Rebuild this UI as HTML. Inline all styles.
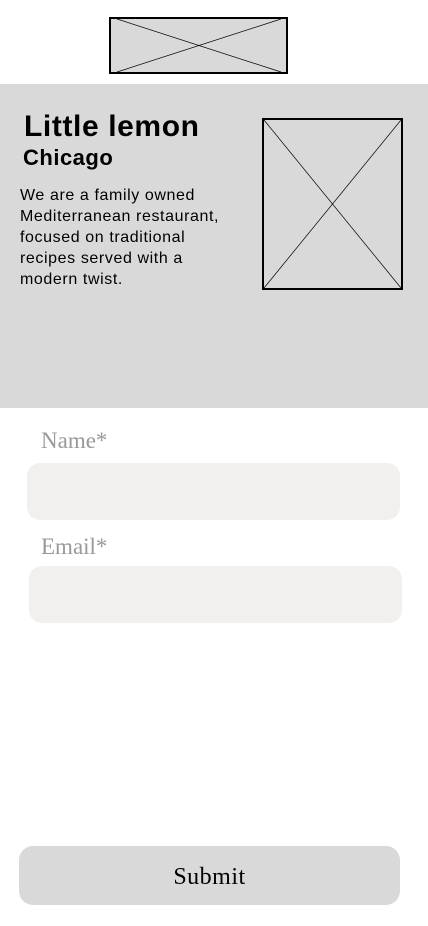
<!DOCTYPE html>
<html><head><style>
*{margin:0;padding:0;box-sizing:border-box}
body{width:428px;height:926px;background:#fff;position:relative;overflow:hidden;font-family:"Liberation Sans",sans-serif}
.a{position:absolute}
.lbl{font-family:"Liberation Serif",serif;font-size:23px;color:#999}
.in{background:#f1f0ef;border-radius:13px}
</style></head><body>
<svg class="a" style="left:109px;top:17px" width="180" height="57"><rect x="1" y="1" width="177" height="55" fill="#d9d9d9" stroke="#000" stroke-width="2"/><line x1="8" y1="2" x2="172" y2="55" stroke="#000" stroke-width=".7"/><line x1="172" y1="2" x2="8" y2="55" stroke="#000" stroke-width=".7"/></svg>
<div class="a" style="left:0;top:84px;width:428px;height:324px;background:#d9d9d9"></div>
<div class="a" style="left:24px;top:110px;font-size:30px;font-weight:bold;color:#000;letter-spacing:.6px">Little lemon</div>
<div class="a" style="left:23px;top:145px;font-size:22px;font-weight:bold;color:#000;letter-spacing:.5px">Chicago</div>
<div class="a" style="left:20px;top:185px;font-size:16px;line-height:21px;color:#000;width:240px;letter-spacing:.6px;white-space:nowrap">We are a family owned<br>Mediterranean restaurant,<br>focused on traditional<br>recipes served with a<br>modern twist.</div>
<svg class="a" style="left:262px;top:118px" width="141" height="172"><rect x="1" y="1" width="139" height="170" fill="none" stroke="#000" stroke-width="2"/><line x1="2" y1="2" x2="139" y2="170" stroke="#000" stroke-width=".7"/><line x1="139" y1="2" x2="2" y2="170" stroke="#000" stroke-width=".7"/></svg>
<div class="a lbl" style="left:41px;top:428px">Name*</div>
<div class="a in" style="left:27px;top:463px;width:373px;height:57px"></div>
<div class="a lbl" style="left:41px;top:534px">Email*</div>
<div class="a in" style="left:29px;top:566px;width:373px;height:57px"></div>
<div class="a" style="left:19px;top:846px;width:381px;height:59px;background:#d9d9d9;border-radius:14px;text-align:center;line-height:63px;font-family:'Liberation Serif',serif;font-size:24px;letter-spacing:.5px;color:#000">Submit</div>
</body></html>
